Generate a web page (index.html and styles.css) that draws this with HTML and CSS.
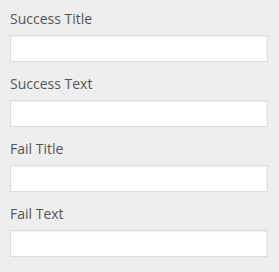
FILE: index.html
```html
<!DOCTYPE html>
<html lang="en">
<head>
  <meta charset="UTF-8">
  <title>Messages</title>
  <link rel="stylesheet" href="styles.css">
</head>
<body>
  <div class="field">
    <label for="successTitle">Success Title</label>
    <input type="text" id="successTitle">
  </div>
  <div class="field">
    <label for="successText">Success Text</label>
    <input type="text" id="successText">
  </div>
  <div class="field">
    <label for="failTitle">Fail Title</label>
    <input type="text" id="failTitle">
  </div>
  <div class="field">
    <label for="failText">Fail Text</label>
    <input type="text" id="failText">
  </div>
</body>
</html>
```

FILE: styles.css
```css
body {
  margin: 0;
  padding: 9px 11px 0 10px;
  background-color: #eeeeee;
  font-family: "Open Sans", Arial, sans-serif;
}
.field {
  margin-bottom: 12px;
}
.field label {
  display: block;
  font-size: 14px;
  line-height: 20px;
  color: #555;
}
.field input {
  display: block;
  box-sizing: border-box;
  width: 100%;
  height: 27px;
  margin-top: 6px;
  margin-bottom: 1px;
  padding: 3px 5px;
  border: 1px solid #ddd;
  background-color: #fff;
  box-shadow: inset 0 1px 2px rgba(0, 0, 0, 0.07);
  font-size: 13px;
}
```
